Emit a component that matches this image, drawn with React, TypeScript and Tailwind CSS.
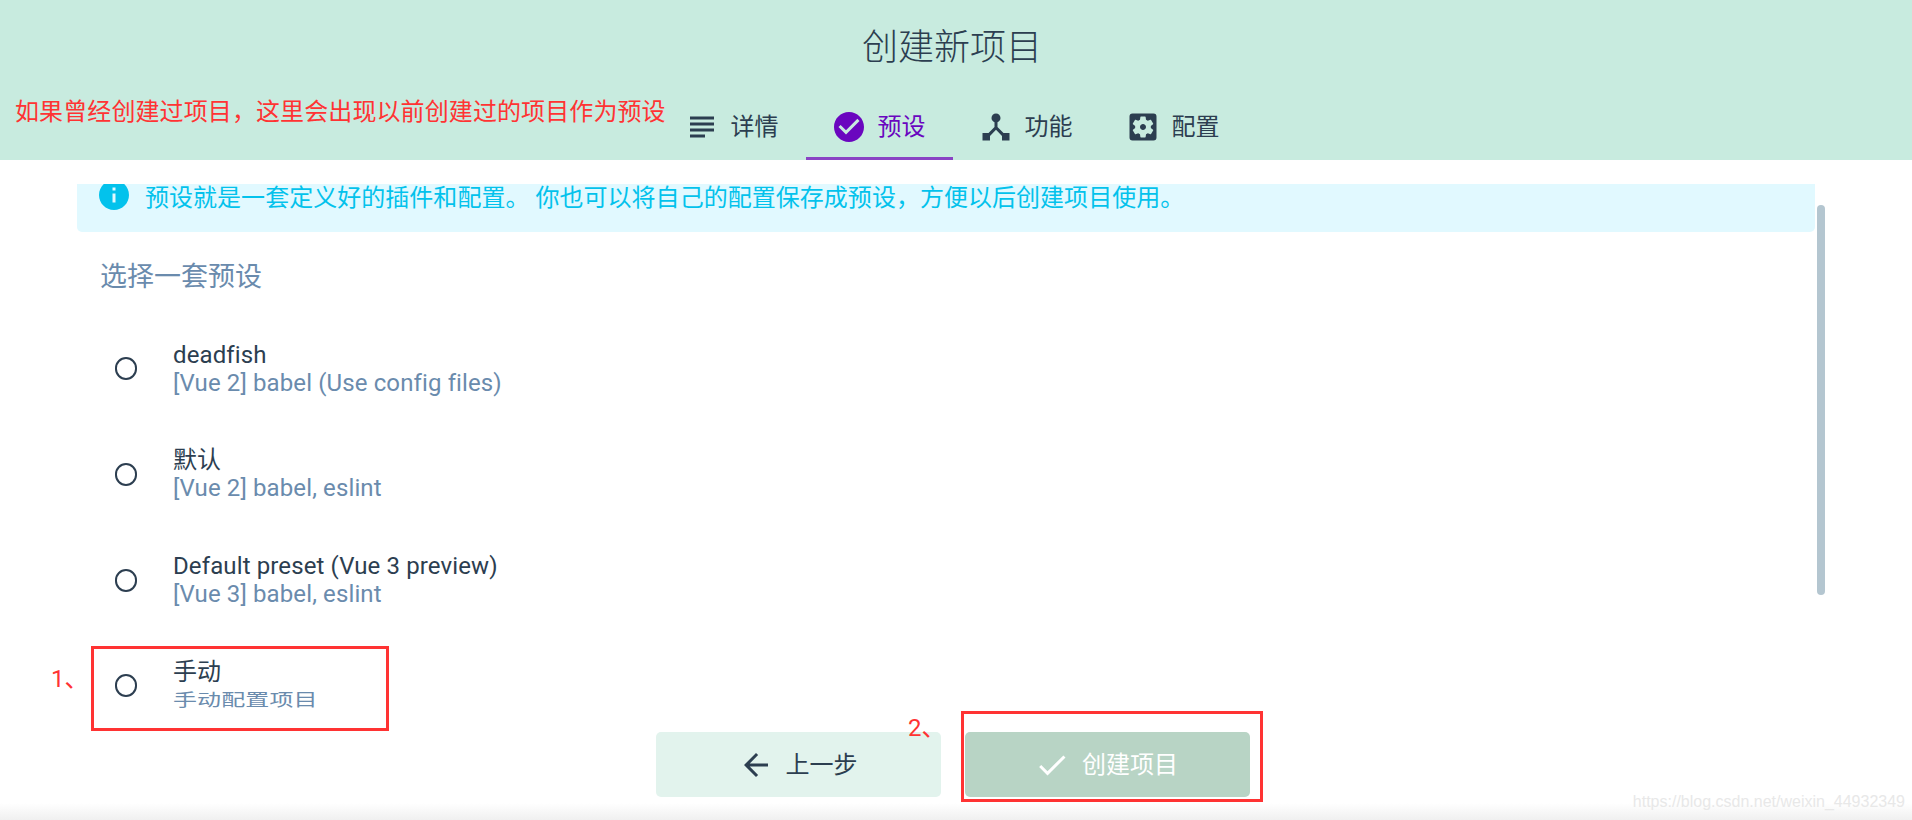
import React from "react";
import { MdSubject, MdCheckCircle, MdDeviceHub, MdSettingsApplications, MdInfo, MdArrowBack, MdCheck } from "react-icons/md";

const tabs = [
  { label: "详情", Icon: MdSubject, active: false },
  { label: "预设", Icon: MdCheckCircle, active: true },
  { label: "功能", Icon: MdDeviceHub, active: false },
  { label: "配置", Icon: MdSettingsApplications, active: false },
];
const presets = [
  { name: "deadfish", desc: "[Vue 2] babel (Use config files)", squeezed: false },
  { name: "默认", desc: "[Vue 2] babel, eslint", squeezed: false },
  { name: "Default preset (Vue 3 preview)", desc: "[Vue 3] babel, eslint", squeezed: false },
  { name: "手动", desc: "手动配置项目", squeezed: true },
];

export default function App() {
  return (
    <div className="relative w-[1912px] h-[820px] overflow-hidden bg-white flex flex-col font-['Roboto','Noto_Sans_CJK_SC',sans-serif] text-[#2c3e50]">
      <header className="h-[160px] shrink-0 bg-[#c8ebdf] flex flex-col items-center">
        <h1 className="mt-[23px] pr-[8px] text-[36px] leading-[50px] font-light">创建新项目</h1>
        <nav className="mt-[20px] flex h-[67px] pr-[6px]">
          {tabs.map(({ label, Icon, active }) => (
            <div
              key={label}
              className={`w-[147px] flex items-center justify-center gap-[11px] text-[24px] border-b-[3px] pt-[3px] pr-[3px] ${active ? "border-[#8a43c4] text-[#6a06bf]" : "border-transparent"}`}
            >
              <Icon size={36} />
              <span>{label}</span>
            </div>
          ))}
        </nav>
      </header>

      <main className="mt-[24px] h-[524px] shrink-0 overflow-hidden">
        <div className="ml-[77px] mr-[97px] h-[48px] bg-[#e1f9ff] rounded-b-[5px] text-[#03c2ec] flex items-start gap-[13px] pl-[19px] text-[24px] tracking-[0.03px]">
          <MdInfo size={36} className="-mt-[7px] shrink-0" />
          <span className="-mt-[2px] leading-[32px]">预设就是一套定义好的插件和配置。 你也可以将自己的配置保存成预设，方便以后创建项目使用。</span>
        </div>
        <div className="ml-[100px] mt-[25px] text-[27px] leading-[40px] text-[#6a8bad]">选择一套预设</div>
        <ul className="mt-[19px] ml-[115px]">
          {presets.map((p) => (
            <li key={p.name} className="h-[105.67px] shrink-0 flex items-center">
              <span className="w-[22px] h-[23px] rounded-full border-[2.5px] border-[#2c3e50]" />
              <div className="ml-[36px] whitespace-nowrap tracking-[0.12px]">
                <div className="text-[24px] leading-[28px]">{p.name}</div>
                <div className={`text-[24px] leading-[28px] text-[#6a8bad] ${p.squeezed ? "origin-center scale-y-[0.7]" : ""}`}>{p.desc}</div>
              </div>
            </li>
          ))}
        </ul>
      </main>

      <footer className="flex-1 relative flex justify-center gap-[24px] pt-[24px] pr-[7px] bg-gradient-to-b from-white from-[85%] to-[#f0f0f0]">
        <button className="w-[285px] h-[65px] rounded-[5px] bg-[#e2f3ed] flex items-center justify-center gap-[12px] text-[24px] pr-[1px]">
          <MdArrowBack size={36} />
          <span>上一步</span>
        </button>
        <button className="w-[285px] h-[65px] rounded-[5px] bg-[#b8d4c5] text-white flex items-center justify-center gap-[12px] text-[24px] pr-[2px]">
          <MdCheck size={36} />
          <span>创建项目</span>
        </button>
        <span className="absolute right-[7px] bottom-[6px] text-[16px] leading-[24px] text-[#e8e8e8] font-['Liberation_Sans',sans-serif]">https://blog.csdn.net/weixin_44932349</span>
      </footer>

      {/* Annotations lying over the page */}
      <div className="absolute left-[15px] top-[94px] text-[24px] leading-[36px] text-[#ff3333] whitespace-nowrap tracking-[0.1px]">如果曾经创建过项目，这里会出现以前创建过的项目作为预设</div>
      <div className="absolute left-[91px] top-[646px] w-[298px] h-[85px] border-[3px] border-[#ff3333]" />
      <div className="absolute left-[51px] top-[661px] text-[24px] leading-[36px] text-[#ff3333]">1、</div>
      <div className="absolute left-[961px] top-[711px] w-[302px] h-[91px] border-[3px] border-[#ff3333]" />
      <div className="absolute left-[908px] top-[710px] text-[24px] leading-[36px] text-[#ff3333]">2、</div>

      <div className="absolute left-[1817px] top-[205px] w-[8px] h-[390px] rounded-full bg-[#b4c6d0]" />
    </div>
  );
}
